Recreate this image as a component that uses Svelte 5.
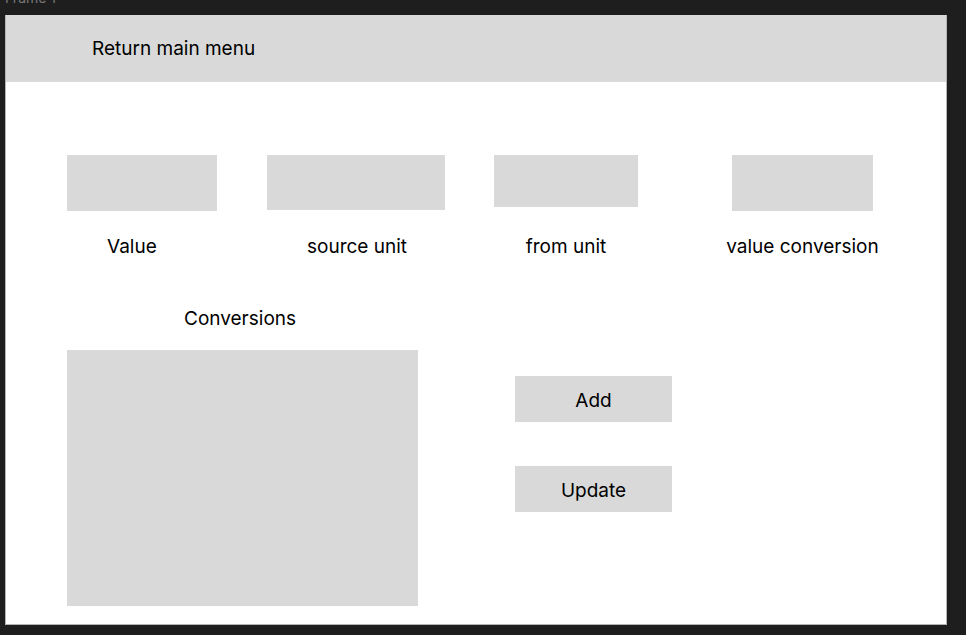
<script>
  let value = $state('');
  let source = $state('');
  let from = $state('');
  let result = $state('');
  let conversions = $state('');
</script>

<div class="canvas">
  <div class="frame-name"><span>Frame 1</span></div>
  <main class="frame">
    <header>
      <a href="#menu">Return main menu</a>
    </header>

    <form onsubmit={(e) => e.preventDefault()}>
      <section class="fields">
        <div class="field start">
          <input id="value" class="tall" bind:value />
          <label for="value">Value</label>
        </div>
        <div class="field start">
          <select id="source" class="medium" bind:value={source}>
            <option value=""></option>
          </select>
          <label for="source">source unit</label>
        </div>
        <div class="field">
          <select id="from" class="short" bind:value={from}>
            <option value=""></option>
          </select>
          <label for="from">from unit</label>
        </div>
        <div class="field">
          <input id="result" class="tall" readonly bind:value={result} />
          <label for="result">value conversion</label>
        </div>
      </section>

      <section class="lower">
        <div class="list">
          <label for="conversions">Conversions</label>
          <textarea id="conversions" readonly bind:value={conversions}></textarea>
        </div>
        <div class="actions">
          <button type="button">Add</button>
          <button type="button">Update</button>
        </div>
      </section>
    </form>
  </main>
</div>

<style>
  :global(body) {
    background: #1e1e1e;
  }

  .canvas {
    box-sizing: border-box;
    min-height: 100vh;
    padding: 0 19px 10px 5px;
    font-family: Inter, sans-serif;
    font-size: 19px;
    line-height: 24px;
    color: #000;
  }

  .frame-name {
    display: flex;
    align-items: flex-end;
    height: 15px;
    overflow: hidden;
    box-sizing: border-box;
    padding-bottom: 9px;
    font-size: 14px;
    line-height: 16px;
    color: #777;
  }

  .frame {
    box-sizing: border-box;
    background: #fff;
    border: 1px solid #b4b4b4;
    border-top: 0;
  }

  header {
    display: flex;
    align-items: center;
    height: 67px;
    padding: 0 86px;
    background: #d9d9d9;
  }

  a {
    color: inherit;
    text-decoration: none;
  }

  form {
    padding: 73px 73px 18px 61px;
  }

  .fields {
    display: grid;
    grid-template-columns: 150fr 50fr 178fr 49fr 144fr 94fr 141fr;
  }

  .field {
    display: grid;
    grid-template-rows: 56px auto;
    row-gap: 24px;
    align-items: start;
    justify-items: center;
    min-width: 0;
  }

  .field:nth-child(2) {
    grid-column: 3;
  }

  .field:nth-child(3) {
    grid-column: 5;
  }

  .field:nth-child(4) {
    grid-column: 7;
    grid-template-columns: 100%;
  }

  .field label {
    white-space: nowrap;
  }

  .field.start label {
    justify-self: start;
    padding-left: 40px;
  }

  input,
  select,
  textarea,
  button {
    display: block;
    box-sizing: border-box;
    width: 100%;
    margin: 0;
    padding: 0 12px;
    border: 0;
    border-radius: 0;
    background: #d9d9d9;
    color: inherit;
    font: inherit;
    appearance: none;
  }

  .tall {
    height: 56px;
  }

  .medium {
    height: 55px;
  }

  .short {
    height: 52px;
  }

  .lower {
    display: grid;
    grid-template-columns: 351fr 97fr 157fr 201fr;
    margin-top: 48px;
  }

  .list label {
    display: block;
    margin-bottom: 19px;
    padding-left: 117px;
  }

  textarea {
    height: 256px;
    padding: 12px;
    resize: none;
  }

  .actions {
    grid-column: 3;
    display: flex;
    flex-direction: column;
    gap: 44px;
    padding-top: 69px;
  }

  button {
    height: 46px;
    padding-top: 4px;
    cursor: pointer;
  }
</style>
